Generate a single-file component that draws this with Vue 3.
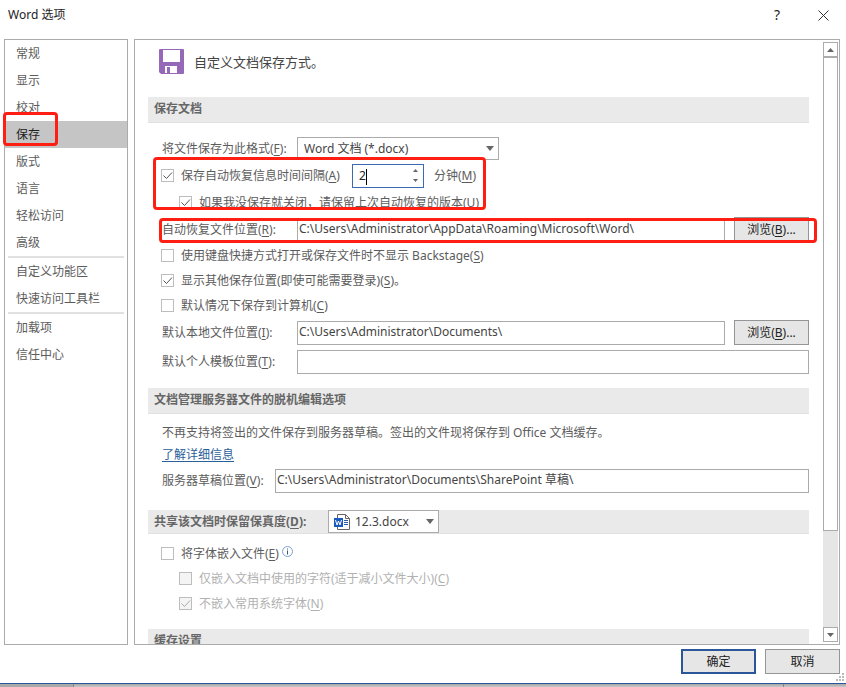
<script setup>
import { ref } from 'vue'

const navGroups = [
  ['常规', '显示', '校对', '保存', '版式', '语言', '轻松访问', '高级'],
  ['自定义功能区', '快速访问工具栏'],
  ['加载项', '信任中心'],
]
const active = ref('保存')

const minutes = ref('2')
const autoRecover = ref(true)
const keepLast = ref(true)
const recoverPath = ref('C:\\Users\\Administrator\\AppData\\Roaming\\Microsoft\\Word\\')
const localPath = ref('C:\\Users\\Administrator\\Documents\\')
const templatePath = ref('')
const draftPath = ref('C:\\Users\\Administrator\\Documents\\SharePoint 草稿\\')

const saveChecks = ref([
  { id: 'backstage', text: '使用键盘快捷方式打开或保存文件时不显示 Backstage', key: 'S', tail: '', on: false },
  { id: 'places', text: '显示其他保存位置(即使可能需要登录)', key: 'S', tail: '。', on: true },
  { id: 'computer', text: '默认情况下保存到计算机', key: 'C', tail: '', on: false },
])
const embedFonts = ref(false)
const embedChecks = ref([
  { id: 'used', text: '仅嵌入文档中使用的字符(适于减小文件大小)', key: 'C', on: false },
  { id: 'common', text: '不嵌入常用系统字体', key: 'N', on: true },
])

function step(by) {
  minutes.value = String(Math.max(1, Number(minutes.value) + by))
}
</script>

<template>
  <div class="dialog">
    <header class="titlebar">
      <h1>Word 选项</h1>
      <button class="title-btn" type="button" aria-label="帮助">?</button>
      <button class="title-btn" type="button" aria-label="关闭">
        <svg width="11" height="11" viewBox="0 0 11 11"><path d="M.5.5l10 10M10.5.5l-10 10" fill="none" stroke="#333" /></svg>
      </button>
    </header>

    <div class="body">
      <nav class="nav">
        <ul v-for="(group, g) in navGroups" :key="g">
          <li v-for="item in group" :key="item">
            <button type="button" :class="{ active: item === active }" @click="active = item">{{ item }}</button>
            <span v-if="item === '保存'" class="mark mark-nav"></span>
          </li>
        </ul>
      </nav>

      <main class="panel">
        <div class="content">
          <div class="intro">
            <svg width="25" height="25" viewBox="0 0 25 25">
              <path d="M1 0h23a1 1 0 0 1 1 1v23a1 1 0 0 1-1 1H2l-2-2V1a1 1 0 0 1 1-1z" fill="#9668b8" />
              <path d="M4 1h17v12H4zM6 17h12v7h-7v-6H8v6H6z" fill="#fff" />
            </svg>
            <p>自定义文档保存方式。</p>
          </div>

          <section>
            <h2 class="banner">保存文档</h2>
            <div class="form form-save">
              <div class="row">
                <label class="name" for="format">将文件保存为此格式(<u>F</u>):</label>
                <span class="select format">
                  <select id="format"><option>Word 文档 (*.docx)</option></select>
                  <svg width="8" height="5" viewBox="0 0 8 5"><path d="M0 0h8L4 5z" fill="#666" /></svg>
                </span>
              </div>

              <div class="marked">
                <div class="row">
                  <label class="check recover">
                    <span class="box"><input v-model="autoRecover" type="checkbox" /><svg v-if="autoRecover" viewBox="0 0 13 13"><path d="M2.500 6.500l3 3 5.500-6" /></svg></span>
                    <span>保存自动恢复信息时间间隔(<u>A</u>)</span>
                  </label>
                  <span class="spinner">
                    <input id="minutes" v-model="minutes" type="text" />
                    <span class="caret"></span>
                    <span class="steps">
                      <button type="button" aria-label="增加" @click="step(1)"><svg width="5" height="3" viewBox="0 0 5 3"><path d="M0 3h5L2.500 0z" fill="#666" /></svg></button>
                      <button type="button" aria-label="减少" @click="step(-1)"><svg width="5" height="3" viewBox="0 0 5 3"><path d="M0 0h5L2.500 3z" fill="#666" /></svg></button>
                    </span>
                  </span>
                  <label class="unit" for="minutes">分钟(<u>M</u>)</label>
                </div>
                <div class="row sub">
                  <label class="check">
                    <span class="box"><input v-model="keepLast" type="checkbox" /><svg v-if="keepLast" viewBox="0 0 13 13"><path d="M2.500 6.500l3 3 5.500-6" /></svg></span>
                    <span>如果我没保存就关闭，请保留上次自动恢复的版本(<u>U</u>)</span>
                  </label>
                </div>
                <span class="mark mark-recover"></span>
              </div>

              <div class="row marked">
                <label class="name" for="recover">自动恢复文件位置(<u>R</u>):</label>
                <input id="recover" v-model="recoverPath" class="path" type="text" />
                <button class="btn" type="button">浏览(<u>B</u>)...</button>
                <span class="mark mark-path"></span>
              </div>

              <div v-for="c in saveChecks" :key="c.id" class="row tight">
                <label class="check">
                  <span class="box"><input v-model="c.on" type="checkbox" /><svg v-if="c.on" viewBox="0 0 13 13"><path d="M2.500 6.500l3 3 5.500-6" /></svg></span>
                  <span>{{ c.text }}(<u>{{ c.key }}</u>){{ c.tail }}</span>
                </label>
              </div>

              <div class="row tall">
                <label class="name" for="local">默认本地文件位置(<u>I</u>):</label>
                <input id="local" v-model="localPath" class="path" type="text" />
                <button class="btn" type="button">浏览(<u>B</u>)...</button>
              </div>
              <div class="row tall">
                <label class="name" for="template">默认个人模板位置(<u>T</u>):</label>
                <input id="template" v-model="templatePath" class="path" type="text" />
              </div>
            </div>
          </section>

          <section>
            <h2 class="banner">文档管理服务器文件的脱机编辑选项</h2>
            <div class="form form-server">
              <p>不再支持将签出的文件保存到服务器草稿。签出的文件现将保存到 Office 文档缓存。</p>
              <p><a href="#">了解详细信息</a></p>
              <div class="row tall">
                <label class="name short" for="draft">服务器草稿位置(<u>V</u>):</label>
                <input id="draft" v-model="draftPath" class="path" type="text" />
              </div>
            </div>
          </section>

          <section>
            <div class="banner slim">
              <h2><label for="doc">共享该文档时保留保真度(<u>D</u>):</label></h2>
              <span class="select doc">
                <svg class="word" width="16" height="16" viewBox="0 0 16 16">
                  <path d="M3.500 4V.5h8l4 4v11h-12V13" fill="#fff" stroke="#666" />
                  <path d="M11.500.5v4h4" fill="none" stroke="#666" />
                  <path d="M10 6.500h4M10 8.500h4M10 10.500h4" stroke="#2b5cb4" />
                  <path d="M0 4h9v9H0z" fill="#185abd" />
                  <path d="M1.500 6l1.500 5 1.500-4 1.500 4 1.500-5" fill="none" stroke="#fff" />
                </svg>
                <select id="doc"><option>12.3.docx</option></select>
                <svg width="8" height="5" viewBox="0 0 8 5"><path d="M0 0h8L4 5z" fill="#666" /></svg>
              </span>
            </div>
            <div class="form form-fonts">
              <div class="row tight">
                <label class="check">
                  <span class="box"><input v-model="embedFonts" type="checkbox" /></span>
                  <span>将字体嵌入文件(<u>E</u>)</span>
                </label>
                <svg class="info" width="11" height="11" viewBox="0 0 11 11">
                  <circle cx="5.500" cy="5.500" r="5" fill="#fff" stroke="#7da0d2" />
                  <path d="M5.500 2.500v1M5.500 4.500v4" stroke="#44546a" />
                </svg>
              </div>
              <div v-for="c in embedChecks" :key="c.id" class="row tight sub off">
                <label class="check">
                  <span class="box"><input v-model="c.on" type="checkbox" disabled /><svg v-if="c.on" viewBox="0 0 13 13"><path d="M2.500 6.500l3 3 5.500-6" /></svg></span>
                  <span>{{ c.text }}(<u>{{ c.key }}</u>)</span>
                </label>
              </div>
            </div>
          </section>

          <section>
            <h2 class="banner">缓存设置</h2>
          </section>
        </div>

        <div class="scrollbar">
          <button type="button" aria-label="向上滚动"><svg width="7" height="4" viewBox="0 0 7 4"><path d="M0 4h7L3.500 0z" fill="#666" /></svg></button>
          <div class="thumb"></div>
          <div class="track"></div>
          <button type="button" aria-label="向下滚动"><svg width="7" height="4" viewBox="0 0 7 4"><path d="M0 0h7L3.500 4z" fill="#666" /></svg></button>
        </div>
      </main>
    </div>

    <footer class="footer">
      <button class="btn primary" type="button">确定</button>
      <button class="btn" type="button">取消</button>
      <svg class="grip" width="8" height="8" viewBox="0 0 8 8"><path d="M6 0h2v2H6zM3 3h2v2H3zM6 3h2v2H6zM0 6h2v2H0zM3 6h2v2H3zM6 6h2v2H6z" fill="#bbb" /></svg>
    </footer>
    <div class="backdrop"><span></span><span></span><span></span></div>
  </div>
</template>

<style>
body {
  margin: 0;
  background: #fff;
}
</style>

<style scoped>
.dialog,
.dialog * {
  box-sizing: border-box;
}
.dialog {
  display: flex;
  flex-direction: column;
  height: 100vh;
  overflow: hidden;
  color: #5c5c5c;
  font-family: "Noto Sans", "Noto Sans CJK SC", sans-serif;
  font-size: 12px;
  line-height: 18px;
}
h1,
h2,
p,
ul {
  margin: 0;
  padding: 0;
}
li {
  list-style: none;
}
button,
input,
select {
  margin: 0;
  padding: 0;
  border: 0;
  border-radius: 0;
  background: none;
  color: inherit;
  font: inherit;
  outline: 0;
}
u {
  text-underline-offset: 2px;
}

.titlebar {
  display: flex;
  flex: none;
  align-items: center;
  height: 39px;
  padding: 0 12px 9px 8px;
  color: #222;
}
h1 {
  flex: 1;
  font-size: 12px;
  font-weight: 400;
}
.title-btn {
  display: grid;
  place-items: center;
  width: 46px;
  height: 28px;
  font-size: 14px;
}
.title-btn:last-child {
  width: 22px;
  margin-left: 12px;
}

.body {
  display: flex;
  flex: 1;
  gap: 6px;
  min-height: 0;
  padding: 0 6px 0 4px;
}
.nav {
  flex: none;
  width: 124px;
  border: 1px solid #ababab;
}
.nav ul + ul::before {
  display: block;
  height: 2px;
  margin: 0 3px;
  background: #e1e1e1;
  content: "";
}
.nav li {
  position: relative;
}
.nav button {
  display: block;
  width: 100%;
  height: 27px;
  padding-left: 11px;
  text-align: left;
}
.nav .active {
  background: #c5c5c5;
  color: #222;
}

.mark {
  position: absolute;
  border: 3px solid #ff1f12;
  border-radius: 4px;
  pointer-events: none;
}
.mark-nav {
  top: -9px;
  left: -2px;
  width: 55px;
  height: 34px;
}
.mark-recover {
  top: -5px;
  bottom: 6px;
  left: -9px;
  width: 333px;
}
.mark-path {
  top: 2px;
  right: -8px;
  bottom: 0;
  left: -3px;
}
.marked {
  position: relative;
}

.panel {
  display: flex;
  flex: 1;
  min-width: 0;
  border: 1px solid #ababab;
}
.content {
  flex: 1;
  min-width: 0;
  padding: 0 13px;
  overflow: hidden;
}
.intro {
  display: flex;
  align-items: center;
  gap: 10px;
  height: 57px;
  padding: 0 0 14px 11px;
  color: #444;
  font-size: 13px;
}
.banner {
  display: flex;
  align-items: center;
  height: 26px;
  padding: 0 0 1px 6px;
  border-bottom: 1px solid #e1e1e1;
  background: #eaeaea;
  color: #666;
  font-size: 12px;
  font-weight: 700;
}
.banner.slim {
  height: 24px;
  padding-bottom: 0;
}
.banner h2 {
  width: 174px;
  font-size: 12px;
}
.form {
  padding-left: 14px;
}
.form-save {
  padding-top: 12px;
  padding-bottom: 12px;
}
.form-server {
  padding-top: 8px;
  padding-bottom: 15px;
}
.form-server p {
  height: 22px;
  line-height: 22px;
}
.form-fonts {
  padding-top: 7px;
  padding-bottom: 13px;
}
a {
  color: #2a6099;
  text-underline-offset: 2px;
}

.row {
  display: flex;
  align-items: center;
  height: 27px;
}
.row.tight {
  height: 25px;
}
.row.tall {
  height: 29px;
}
.row.sub {
  padding-left: 18px;
}
.row.off {
  color: #b1b1b1;
}
.name {
  flex: none;
  width: 135px;
}
.name.short {
  width: 113px;
}
.path {
  flex: 1;
  min-width: 0;
  height: 24px;
  padding: 0 1px 3px;
  border: 1px solid #ababab;
  background: #fff;
  color: #444;
}
.path + .btn {
  margin-left: 9px;
}
.btn {
  flex: none;
  width: 75px;
  height: 25px;
  border: 1px solid #959595;
  background: #e6e6e6;
  color: #222;
}
.btn.primary {
  border: 2px solid #2b579a;
}

.check {
  display: flex;
  align-items: center;
  gap: 7px;
  margin-left: -1px;
}
.recover {
  width: 191px;
}
.box {
  display: grid;
  flex: none;
  width: 13px;
  height: 13px;
}
.box > * {
  grid-area: 1 / 1;
  width: 13px;
  height: 13px;
}
.box input {
  appearance: none;
  border: 1px solid #bdbdbd;
  background: #fff;
}
.box svg {
  fill: none;
  stroke: #555;
  pointer-events: none;
}
.off .box input {
  background: #f4f4f4;
}
.off .box svg {
  stroke: #ababab;
}

.select {
  display: flex;
  align-items: center;
  height: 23px;
  padding: 0 4px 0 6px;
  border: 1px solid #ababab;
  background: #fff;
  color: #444;
  font-weight: 400;
}
.select select {
  flex: 1;
  min-width: 0;
  appearance: none;
}
.format {
  width: 202px;
}
.doc {
  width: 111px;
  padding-left: 5px;
}
.word {
  margin-right: 5px;
}

.spinner {
  position: relative;
  display: flex;
  width: 72px;
  height: 24px;
  border: 1px solid #3c69b0;
  background: #fff;
  color: #222;
}
.spinner input {
  flex: 1;
  min-width: 0;
  padding-left: 6px;
}
.caret {
  position: absolute;
  top: 4px;
  left: 13px;
  width: 1px;
  height: 16px;
  background: #000;
}
.steps {
  display: grid;
  width: 15px;
  padding: 1px 0;
}
.steps button {
  display: grid;
  place-items: center;
}
.unit {
  margin-left: 10px;
}
.info {
  margin: 0 0 4px 3px;
}

.scrollbar {
  display: flex;
  flex: none;
  flex-direction: column;
  width: 15px;
  margin: 2px 1px;
  background: #e6e6e6;
}
.scrollbar button {
  display: grid;
  flex: none;
  place-items: center;
  height: 15px;
  border: 1px solid #ababab;
  background: #fff;
}
.thumb {
  flex: 474;
  border: 1px solid #ababab;
  background: #fff;
}
.track {
  flex: 96;
}

.footer {
  position: relative;
  display: flex;
  flex: none;
  gap: 9px;
  justify-content: flex-end;
  height: 39px;
  padding: 4px 6px 0;
  border-bottom: 1px solid #2b579a;
}
.grip {
  position: absolute;
  right: 2px;
  bottom: 2px;
}
.backdrop {
  display: flex;
  flex: none;
  gap: 1px;
  height: 3px;
  background: #888;
}
.backdrop span {
  flex: 709;
  background: linear-gradient(#a6a6a6, #c8c8c8);
}
.backdrop span:first-child {
  flex: 73;
  background: #a9a9a9;
}
.backdrop span:last-child {
  flex: 62;
}
</style>
